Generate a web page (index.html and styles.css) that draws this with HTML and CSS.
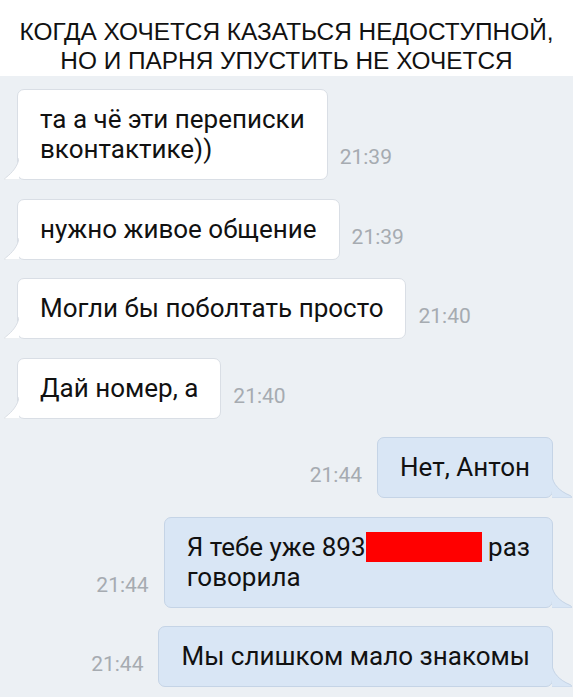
FILE: index.html
```html
<!DOCTYPE html>
<html lang="ru">
<head>
    <meta charset="UTF-8">
    <meta name="viewport" content="width=device-width, initial-scale=1.0">
    <title>Недоступная</title>
    <link rel="stylesheet" href="styles.css">
</head>
<body>
<header class="caption">
    КОГДА ХОЧЕТСЯ КАЗАТЬСЯ НЕДОСТУПНОЙ,<br>НО И ПАРНЯ УПУСТИТЬ НЕ ХОЧЕТСЯ
</header>

<main class="chat">
    <!-- Входящие -->
    <div class="msg msg-in">
        <div class="bubble">
            та а чё эти переписки<br>вконтактике))
            <svg class="tail" viewBox="0 0 15 22"><path class="tail-fill" d="M15 0 C14 8 8 15 2 19.5 C0 20.7 0.6 22 2 22 L15 22 Z"/><path class="tail-line" d="M15 0 C14 8 8 15 2 19.5 C0 20.7 0.6 22 2 22 L15 22"/></svg>
        </div>
        <span class="time">21:39</span>
    </div>
    <div class="msg msg-in">
        <div class="bubble">
            нужно живое общение
            <svg class="tail" viewBox="0 0 15 22"><path class="tail-fill" d="M15 0 C14 8 8 15 2 19.5 C0 20.7 0.6 22 2 22 L15 22 Z"/><path class="tail-line" d="M15 0 C14 8 8 15 2 19.5 C0 20.7 0.6 22 2 22 L15 22"/></svg>
        </div>
        <span class="time">21:39</span>
    </div>
    <div class="msg msg-in">
        <div class="bubble">
            Могли бы поболтать просто
            <svg class="tail" viewBox="0 0 15 22"><path class="tail-fill" d="M15 0 C14 8 8 15 2 19.5 C0 20.7 0.6 22 2 22 L15 22 Z"/><path class="tail-line" d="M15 0 C14 8 8 15 2 19.5 C0 20.7 0.6 22 2 22 L15 22"/></svg>
        </div>
        <span class="time">21:40</span>
    </div>
    <div class="msg msg-in">
        <div class="bubble">
            Дай номер, а
            <svg class="tail" viewBox="0 0 15 22"><path class="tail-fill" d="M15 0 C14 8 8 15 2 19.5 C0 20.7 0.6 22 2 22 L15 22 Z"/><path class="tail-line" d="M15 0 C14 8 8 15 2 19.5 C0 20.7 0.6 22 2 22 L15 22"/></svg>
        </div>
        <span class="time">21:40</span>
    </div>

    <!-- Исходящие -->
    <div class="msg msg-out">
        <span class="time">21:44</span>
        <div class="bubble">
            Нет, Антон
            <svg class="tail" viewBox="0 0 21 22"><path class="tail-fill" d="M0 0 C1 8 7 15 18 19.5 C20.5 20.7 20 22 18 22 L0 22 Z"/><path class="tail-line" d="M0 0 C1 8 7 15 18 19.5 C20.5 20.7 20 22 18 22 L0 22"/></svg>
        </div>
    </div>
    <div class="msg msg-out">
        <span class="time">21:44</span>
        <div class="bubble">
            Я тебе уже 893<span class="redacted"></span> раз<br>говорила
            <svg class="tail" viewBox="0 0 21 22"><path class="tail-fill" d="M0 0 C1 8 7 15 18 19.5 C20.5 20.7 20 22 18 22 L0 22 Z"/><path class="tail-line" d="M0 0 C1 8 7 15 18 19.5 C20.5 20.7 20 22 18 22 L0 22"/></svg>
        </div>
    </div>
    <div class="msg msg-out">
        <span class="time">21:44</span>
        <div class="bubble">
            Мы слишком мало знакомы
            <svg class="tail" viewBox="0 0 21 22"><path class="tail-fill" d="M0 0 C1 8 7 15 18 19.5 C20.5 20.7 20 22 18 22 L0 22 Z"/><path class="tail-line" d="M0 0 C1 8 7 15 18 19.5 C20.5 20.7 20 22 18 22 L0 22"/></svg>
        </div>
    </div>
</main>
</body>
</html>
```

FILE: styles.css
```css
body {
    margin: 0;
    padding: 0;
    background-color: #fff;
    font-family: Roboto, "Noto Sans", sans-serif;
}
.caption {
    height: 76px;
    box-sizing: border-box;
    padding-top: 17px;
    text-align: center;
    font-family: "Liberation Sans", Arial, sans-serif;
    font-size: 24.4px;
    line-height: 29px;
    color: #111;
}
.chat {
    background-color: #ecf0f4;
    padding: 13px 0 12px;
    display: flex;
    flex-direction: column;
    gap: 18.5px;
}
.msg {
    display: flex;
    align-items: flex-end;
}
.msg-in {
    padding-left: 17px;
}
.msg-out {
    justify-content: flex-end;
    padding-right: 20px;
}
.bubble {
    position: relative;
    padding: 14px 22px 15px;
    border-radius: 7px;
    font-size: 26px;
    line-height: 30px;
    color: #111;
}
.msg-in .bubble {
    background-color: #fff;
    border: 1px solid #d9dee5;
}
.msg-out .bubble {
    background-color: #d9e6f5;
    border: 1px solid #c5d4e6;
}
.time {
    font-size: 21px;
    line-height: 24px;
    color: #a6abb1;
    margin-bottom: 11px;
}
.msg-in .time {
    margin-left: 12px;
}
.msg-out .time {
    margin-right: 15px;
}
.tail {
    position: absolute;
    bottom: -1px;
    height: 22px;
}
.msg-in .tail {
    left: -14px;
    width: 15px;
}
.msg-out .tail {
    right: -21px;
    width: 21px;
}
.tail-line {
    fill: none;
    stroke-width: 1;
}
.msg-in .tail-fill { fill: #fff; }
.msg-in .tail-line { stroke: #d9dee5; }
.msg-out .tail-fill { fill: #d9e6f5; }
.msg-out .tail-line { stroke: #c5d4e6; }
.redacted {
    display: inline-block;
    width: 116px;
    height: 30px;
    vertical-align: -6px;
    background-color: #ff0000;
}
```
